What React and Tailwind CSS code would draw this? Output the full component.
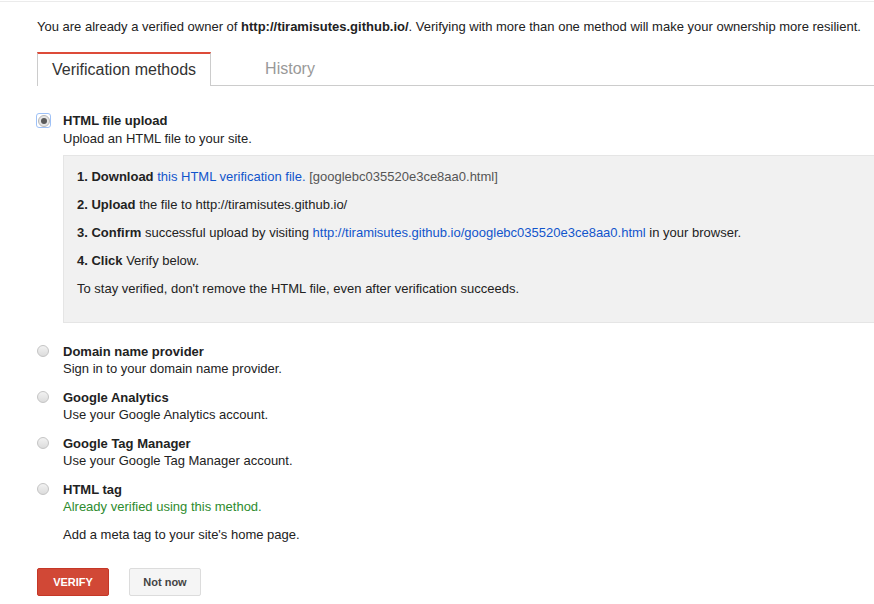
import React, { useState } from "react";

const methods = [
  { id: "dns", title: "Domain name provider", desc: "Sign in to your domain name provider." },
  { id: "ga", title: "Google Analytics", desc: "Use your Google Analytics account." },
  { id: "gtm", title: "Google Tag Manager", desc: "Use your Google Tag Manager account." },
];

const Radio = ({ checked }) => (
  <span className="flex w-[14px] shrink-0 justify-start">
    {checked ? (
      <span className="mt-[1px] -ml-px flex h-[15px] w-[15px] items-center justify-center rounded-[3px] border border-[#9ec1f7] bg-white">
        <span className="flex h-[12px] w-[12px] items-center justify-center rounded-full border border-[#b8b8b8] bg-[#e6e6e6]">
          <span className="h-[6px] w-[6px] rounded-full bg-[#5a5a5a]" />
        </span>
      </span>
    ) : (
      <span className="mt-[2px] h-[12px] w-[12px] rounded-full border border-[#c4c4c4] bg-gradient-to-b from-[#f2f2f2] to-[#dcdcdc]" />
    )}
  </span>
);

const Option = ({ checked, title, children }) => (
  <div className="flex gap-[12px]">
    <Radio checked={checked} />
    <div className="flex-1">
      <div className="font-bold leading-[17px] text-[#222]">{title}</div>
      {children}
    </div>
  </div>
);

export default function App() {
  const [tab] = useState("methods");

  return (
    <div className="min-h-[604px] overflow-hidden bg-white text-[13px] text-[#222] font-['Liberation_Sans',Arial,sans-serif]">
      <div className="mt-px h-px bg-[#ebebeb]" />

      <div className="pl-[37px]">
        <p className="mt-[17px] leading-4 whitespace-nowrap">
          You are already a verified owner of <b>http://tiramisutes.github.io/</b>. Verifying with more than one method will make your ownership more resilient.
        </p>

        {/* tabs */}
        <div className="mt-[17px] flex border-b border-[#ccc]">
          <div
            className={`-mb-px flex h-[34px] w-[174px] items-center justify-center border-x border-t-2 border-x-[#ccc] border-t-[#dd4b39] bg-white text-[16px] ${
              tab === "methods" ? "text-[#333]" : "text-[#999]"
            }`}
          >
            Verification methods
          </div>
          <div className="flex h-[33px] w-[158px] items-center justify-center text-[16px] text-[#999]">
            History
          </div>
        </div>

        <div className="mt-[26px] flex flex-col">
          <Option checked title="HTML file upload">
            <div className="mt-px leading-[18px]">Upload an HTML file to your site.</div>
            <div className="mt-[7px] -mr-px border border-[#e5e5e5] bg-[#f1f1f1] pl-[13px] pt-[13px] pb-[25px]">
              <div className="leading-4">
                <b>1. Download</b> <span className="text-[#15c]">this HTML verification file.</span>{" "}
                <span className="text-[#555]">[googlebc035520e3ce8aa0.html]</span>
              </div>
              <div className="mt-3 leading-4">
                <b>2. Upload</b> the file to http://tiramisutes.github.io/
              </div>
              <div className="mt-3 leading-4 whitespace-nowrap">
                <b>3. Confirm</b> successful upload by visiting{" "}
                <span className="text-[#15c]">http://tiramisutes.github.io/googlebc035520e3ce8aa0.html</span> in your browser.
              </div>
              <div className="mt-3 leading-4">
                <b>4. Click</b> Verify below.
              </div>
              <div className="mt-3 leading-4">
                To stay verified, don't remove the HTML file, even after verification succeeds.
              </div>
            </div>
          </Option>

          <div className="mt-[20px] flex flex-col gap-[11px]">
            {methods.map((m) => (
              <Option key={m.id} title={m.title}>
                <div className="leading-[18px]">{m.desc}</div>
              </Option>
            ))}
            <Option title="HTML tag">
              <div className="leading-[18px] text-[#2e8b2e]">Already verified using this method.</div>
              <div className="mt-[10px] leading-[18px]">Add a meta tag to your site's home page.</div>
            </Option>
          </div>
        </div>

        <div className="mt-[24px] flex gap-5">
          <button className="h-[28px] w-[72px] rounded-[2px] border border-[#c53727] bg-[#d14836] text-[11px] font-bold text-white">
            VERIFY
          </button>
          <button className="h-[28px] w-[72px] rounded-[2px] border border-[#dcdcdc] bg-[#f5f5f5] text-[11px] font-bold text-[#444]">
            Not now
          </button>
        </div>
      </div>
    </div>
  );
}
